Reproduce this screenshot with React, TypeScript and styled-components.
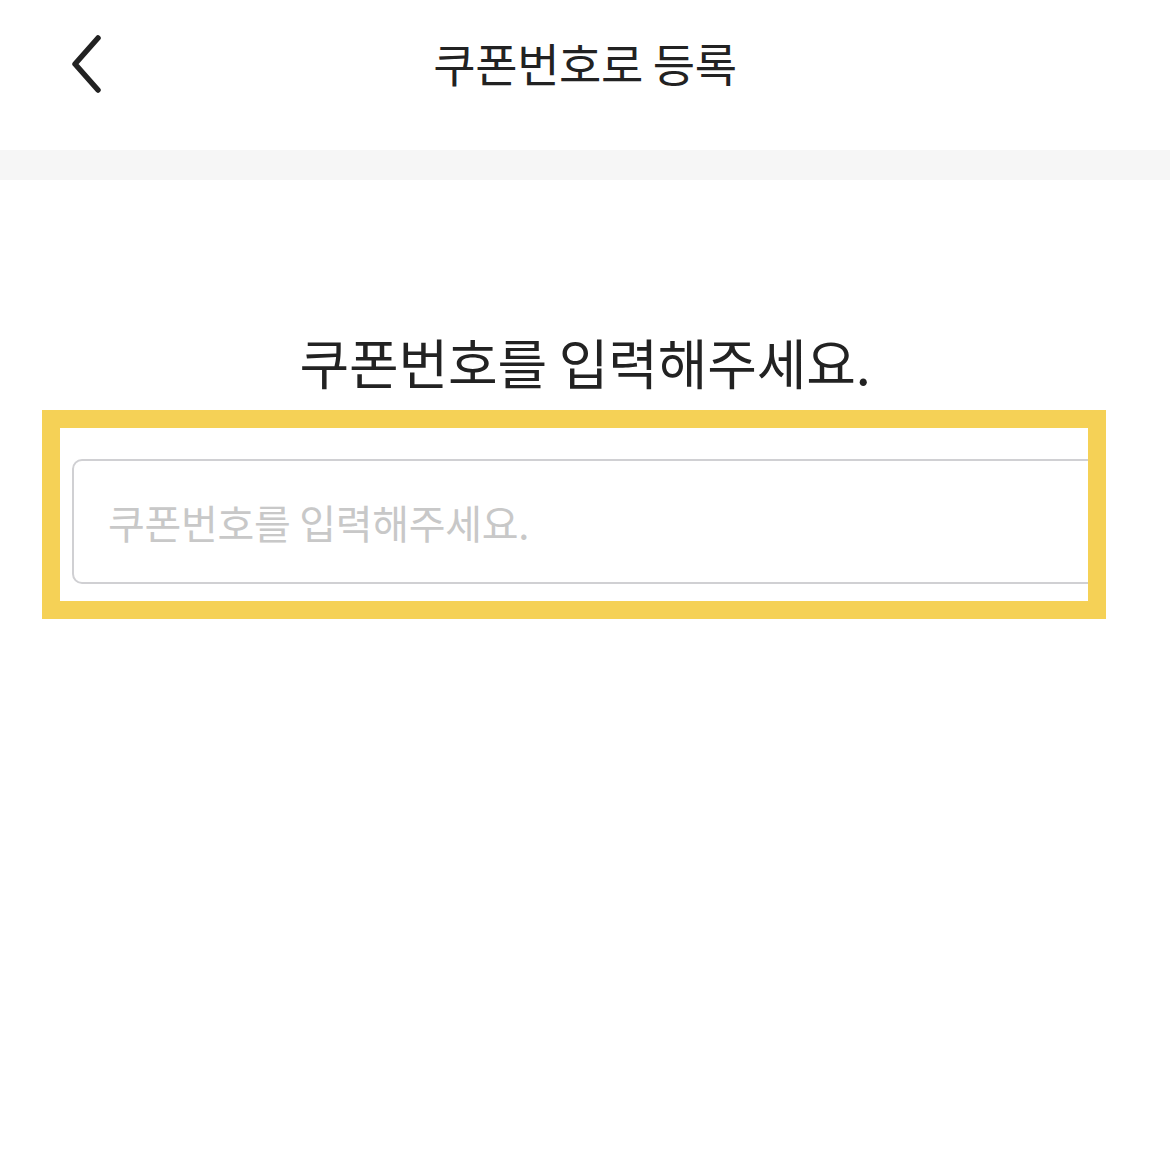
import React from "react";
import styled, { createGlobalStyle } from "styled-components";

const Global = createGlobalStyle`
  html, body { margin: 0; padding: 0; background: #ffffff; }
  body { font-family: "Noto Sans CJK KR", "Noto Sans", sans-serif; color: #222222; }
  * { box-sizing: border-box; }
`;

const Page = styled.div`
  width: 1170px;
  min-height: 1170px;
  background: #ffffff;
  display: flex;
  flex-direction: column;
`;

const Header = styled.header`
  position: relative;
  height: 150px;
  display: flex;
  align-items: flex-start;
  justify-content: center;
  padding-top: 29px;
`;

const BackButton = styled.button`
  position: absolute;
  left: 59px;
  top: 28px;
  width: 56px;
  height: 70px;
  border: 0;
  padding: 0;
  background: transparent;
  display: flex;
  align-items: center;
  justify-content: center;
`;

const Title = styled.h1`
  margin: 0;
  font-size: 46px;
  font-weight: 400;
  line-height: 66px;
  letter-spacing: -0.4px;
  color: #222222;
`;

const Band = styled.div`
  height: 30px;
  background: #f6f6f6;
`;

const Content = styled.main`
  display: flex;
  flex-direction: column;
  padding-top: 145px;
`;

const Heading = styled.h2`
  margin: 0;
  text-align: center;
  font-size: 54px;
  font-weight: 400;
  line-height: 74px;
  letter-spacing: -0.2px;
  color: #222222;
`;

const Highlight = styled.div`
  margin: 11px 0 0 42px;
  width: 1064px;
  border: 18px solid #f5d156;
  overflow: hidden;
  padding: 31px 0 17px 12px;
  background: #ffffff;
`;

const Input = styled.input`
  display: block;
  width: 1060px;
  height: 125px;
  border: 2px solid #d0d0d3;
  border-radius: 10px;
  padding: 0 0 0 34px;
  font-family: "Noto Sans CJK KR", "Noto Sans", sans-serif;
  font-size: 40px;
  color: #222222;
  letter-spacing: -0.3px;
  outline: none;
  background: #ffffff;
  &::placeholder { color: #c8c8c8; }
`;

export default function App() {
  return (
    <Page>
      <Global />
      <Header>
        <BackButton aria-label="뒤로">
          <svg width="40" height="60" viewBox="0 0 40 60" fill="none">
            <path d="M31 5 L8 31 L31 57" stroke="#222222" strokeWidth="5.5" strokeLinecap="round" strokeLinejoin="round" />
          </svg>
        </BackButton>
        <Title>쿠폰번호로 등록</Title>
      </Header>
      <Band />
      <Content>
        <Heading>쿠폰번호를 입력해주세요.</Heading>
        <Highlight>
          <Input placeholder="쿠폰번호를 입력해주세요." />
        </Highlight>
      </Content>
    </Page>
  );
}
